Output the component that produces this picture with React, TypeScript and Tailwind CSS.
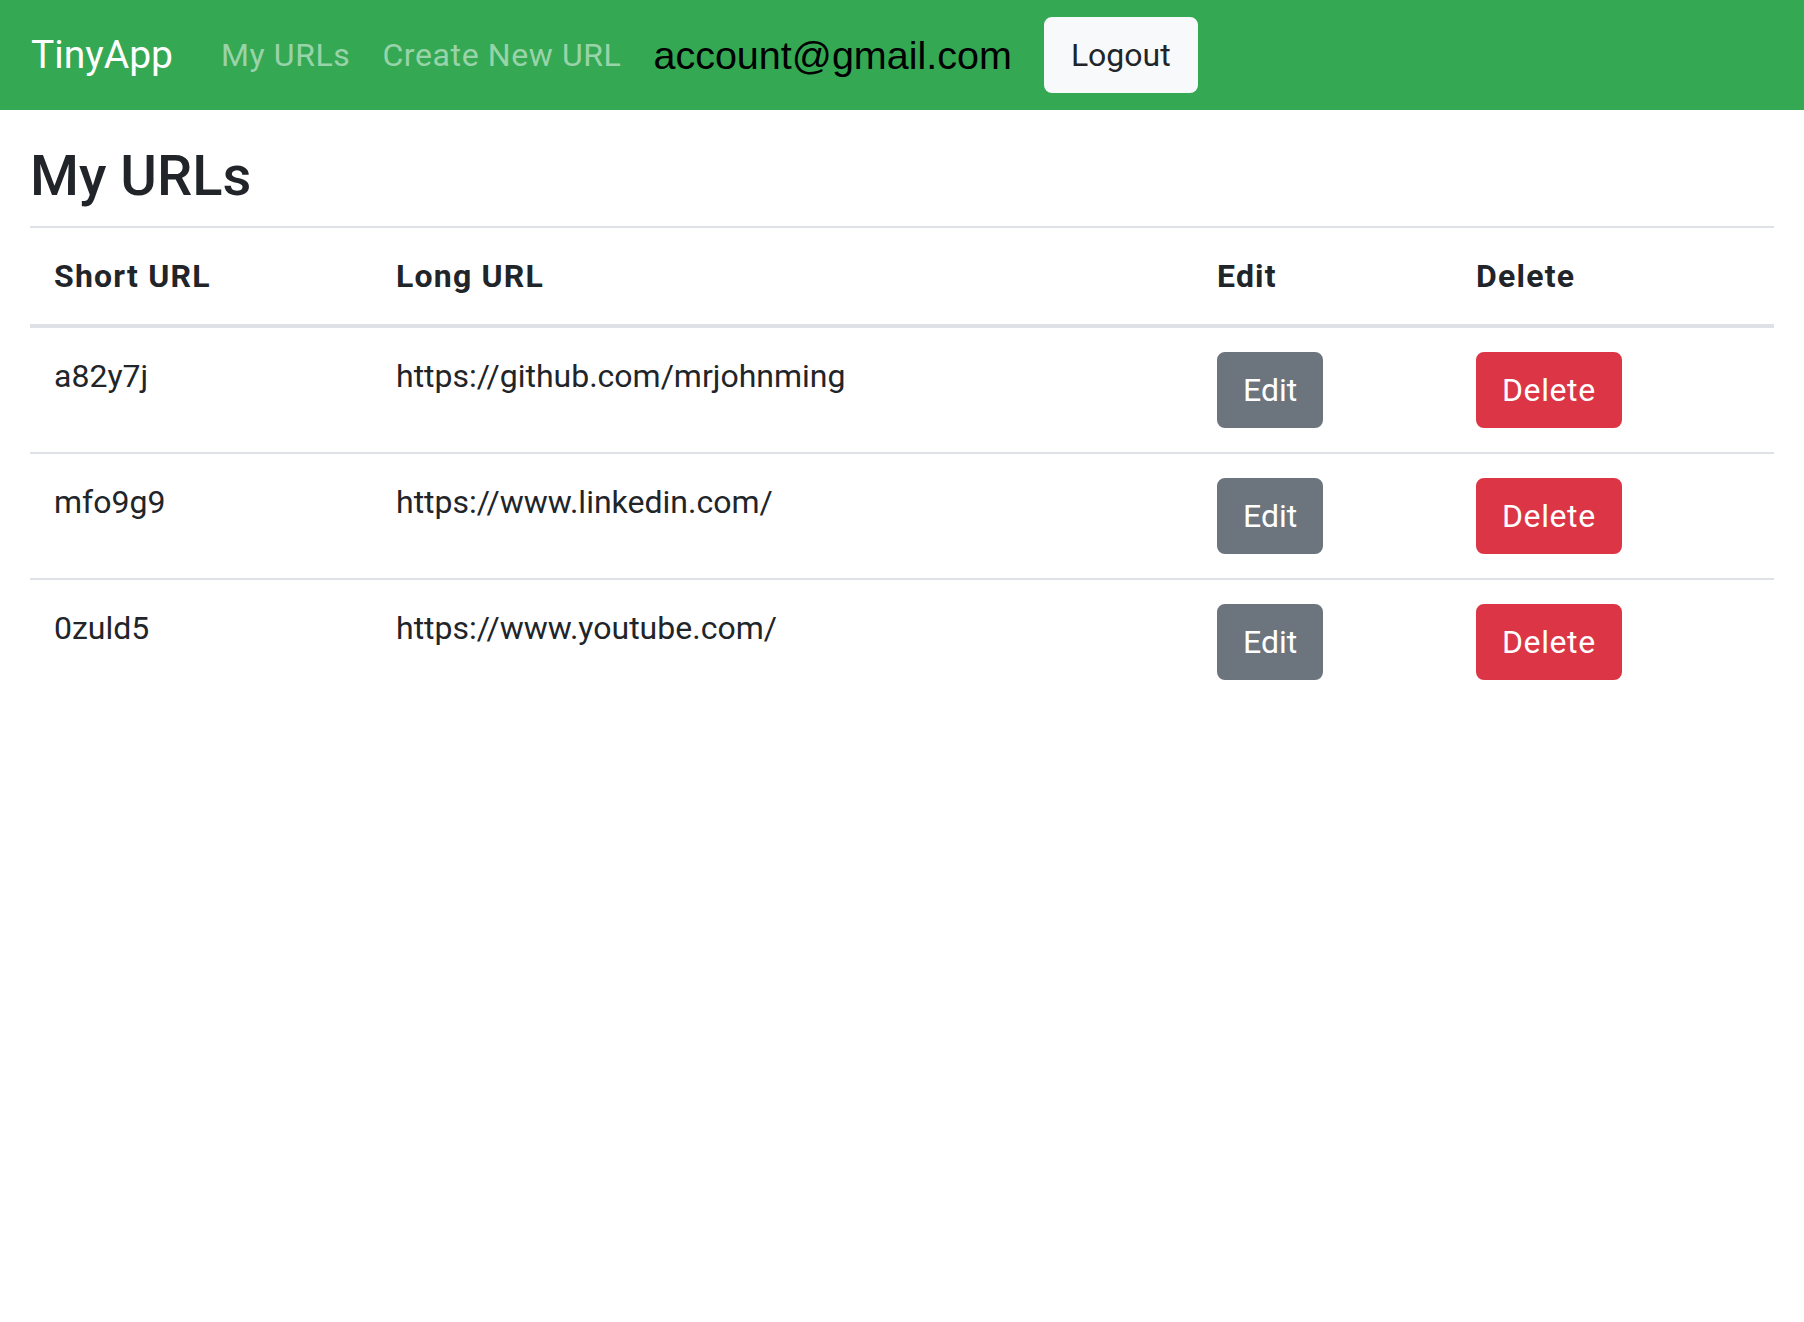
import React from 'react';

interface UrlRow {
  short: string;
  long: string;
}

const urls: UrlRow[] = [
  { short: 'a82y7j', long: 'https://github.com/mrjohnming' },
  { short: 'mfo9g9', long: 'https://www.linkedin.com/' },
  { short: '0zuld5', long: 'https://www.youtube.com/' },
];

const cols = 'grid grid-cols-[342px_821px_259px_1fr]';

export default function App() {
  return (
    <div className="min-h-[1322px] bg-white font-['Roboto',sans-serif] text-[#212529]">
      <nav className="flex h-[110px] items-center bg-[#34a853] px-[31px]">
        <a className="mr-[32px] text-[39px] leading-[60px] text-white">TinyApp</a>
        <a className="px-[16px] text-[32px] leading-[48px] tracking-[0.6px] text-white/50">My URLs</a>
        <a className="px-[16px] text-[32px] leading-[48px] tracking-[0.6px] text-white/50">Create New URL</a>
        <span className="ml-[16px] font-['Liberation_Sans',Arial,sans-serif] text-[39.5px] leading-[48px] text-black">
          account@gmail.com
        </span>
        <button className="ml-[32px] h-[76px] rounded-[8px] border-2 border-[#f8f9fa] bg-[#f8f9fa] px-[25px] text-[32px] leading-[48px] text-[#212529]">
          Logout
        </button>
      </nav>

      <main className="px-[30px]">
        <h3 className="mb-[16px] mt-[33px] text-[56px] font-medium leading-[1.2]">My URLs</h3>

        <div className="w-full">
          <div className={`${cols} border-y-[#dee2e6] border-t-2 border-b-4 text-[32px] font-bold leading-[48px] tracking-[1.2px]`}>
            <div className="p-[24px]">Short URL</div>
            <div className="p-[24px]">Long URL</div>
            <div className="p-[24px]">Edit</div>
            <div className="p-[24px]">Delete</div>
          </div>
          {urls.map((u, i) => (
            <div
              key={u.short}
              className={`${cols} text-[32px] leading-[48px] ${i > 0 ? 'border-t-2 border-[#dee2e6]' : ''}`}
            >
              <div className="p-[24px]">{u.short}</div>
              <div className="p-[24px]">{u.long}</div>
              <div className="p-[24px]">
                <button className="h-[76px] rounded-[8px] border-2 border-[#6c757d] bg-[#6c757d] px-[24px] text-white">
                  Edit
                </button>
              </div>
              <div className="p-[24px]">
                <button className="h-[76px] rounded-[8px] border-2 border-[#dc3545] bg-[#dc3545] px-[24px] tracking-[0.6px] text-white">
                  Delete
                </button>
              </div>
            </div>
          ))}
        </div>
      </main>
    </div>
  );
}
